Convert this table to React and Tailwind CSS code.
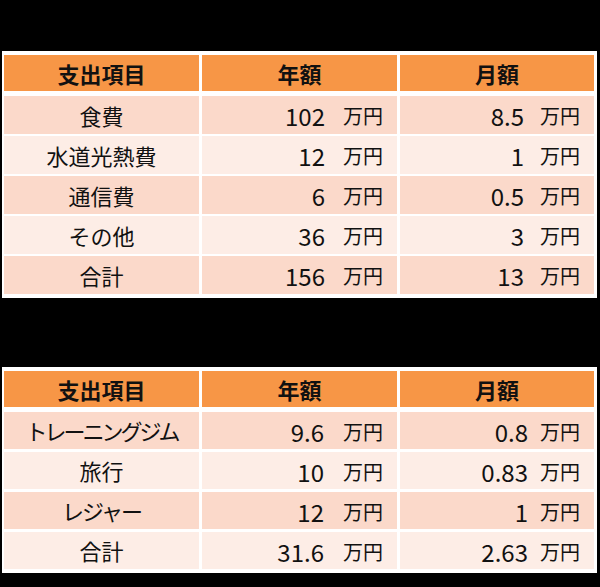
import React from 'react';

const font = { fontFamily: '"Noto Sans CJK JP", "Noto Sans", sans-serif' };

const table1 = [
  ['食費', '102', '8.5'],
  ['水道光熱費', '12', '1'],
  ['通信費', '6', '0.5'],
  ['その他', '36', '3'],
  ['合計', '156', '13'],
];

const table2 = [
  ['トレーニングジム', '9.6', '0.8', 'tracking-[-3px]'],
  ['旅行', '10', '0.83'],
  ['レジャー', '12', '1', 'tracking-[-2px]'],
  ['合計', '31.6', '2.63'],
];

const Amount = ({ value, gap }) => (
  <div className="flex items-center justify-end pr-[14px] pt-[2px]">
    <span className="text-[24px] leading-none text-[#111]">{value}</span>
    <span className={`${gap} text-[20px] leading-none text-[#111]`}>万円</span>
  </div>
);

const Table = ({ rows, rowH, rowGap, gap2, gap3 }) => (
  <div className="ml-[2px] w-[595px] bg-white pt-[4px] pb-[4px] pl-[2px] pr-[3px]">
    <div className="grid grid-cols-[195px_195px_194px] gap-x-[3px] h-[36px] bg-white">
      {['支出項目', '年額', '月額'].map((h) => (
        <div key={h} className="bg-[#f79646] flex items-center justify-center text-[22px] font-bold text-[#111]">
          {h}
        </div>
      ))}
    </div>
    <div className={`mt-[5px] flex flex-col ${rowGap}`}>
      {rows.map((r, i) => {
        const bg = i % 2 === 0 ? 'bg-[#fbd9ca]' : 'bg-[#fdede6]';
        return (
          <div key={r[0]} className={`grid grid-cols-[195px_195px_194px] gap-x-[3px] ${rowH}`}>
            <div className={`${bg} flex items-center justify-center text-[22px] text-[#111] ${r[3] || ''}`}>{r[0]}</div>
            <div className={`${bg} flex items-center justify-end`}>
              <Amount value={r[1]} gap={gap2} />
            </div>
            <div className={`${bg} flex items-center justify-end`}>
              <Amount value={r[2]} gap={gap3} />
            </div>
          </div>
        );
      })}
    </div>
  </div>
);

export default function App() {
  return (
    <div className="w-[600px] h-[587px] bg-black overflow-hidden" style={font}>
      <div className="h-[51px] flex items-center pl-[10px] text-[20px] font-bold text-black">■生活費の内訳</div>
      <Table rows={table1} rowH="h-[38px]" rowGap="gap-y-[2px]" gap2="ml-[18px]" gap3="ml-[16px]" />
      <div className="h-[69px] flex items-center pl-[10px] text-[20px] font-bold text-black">■趣味・娯楽費の内訳</div>
      <Table rows={table2} rowH="h-[37px]" rowGap="gap-y-[3px]" gap2="ml-[19px]" gap3="ml-[12px]" />
    </div>
  );
}
